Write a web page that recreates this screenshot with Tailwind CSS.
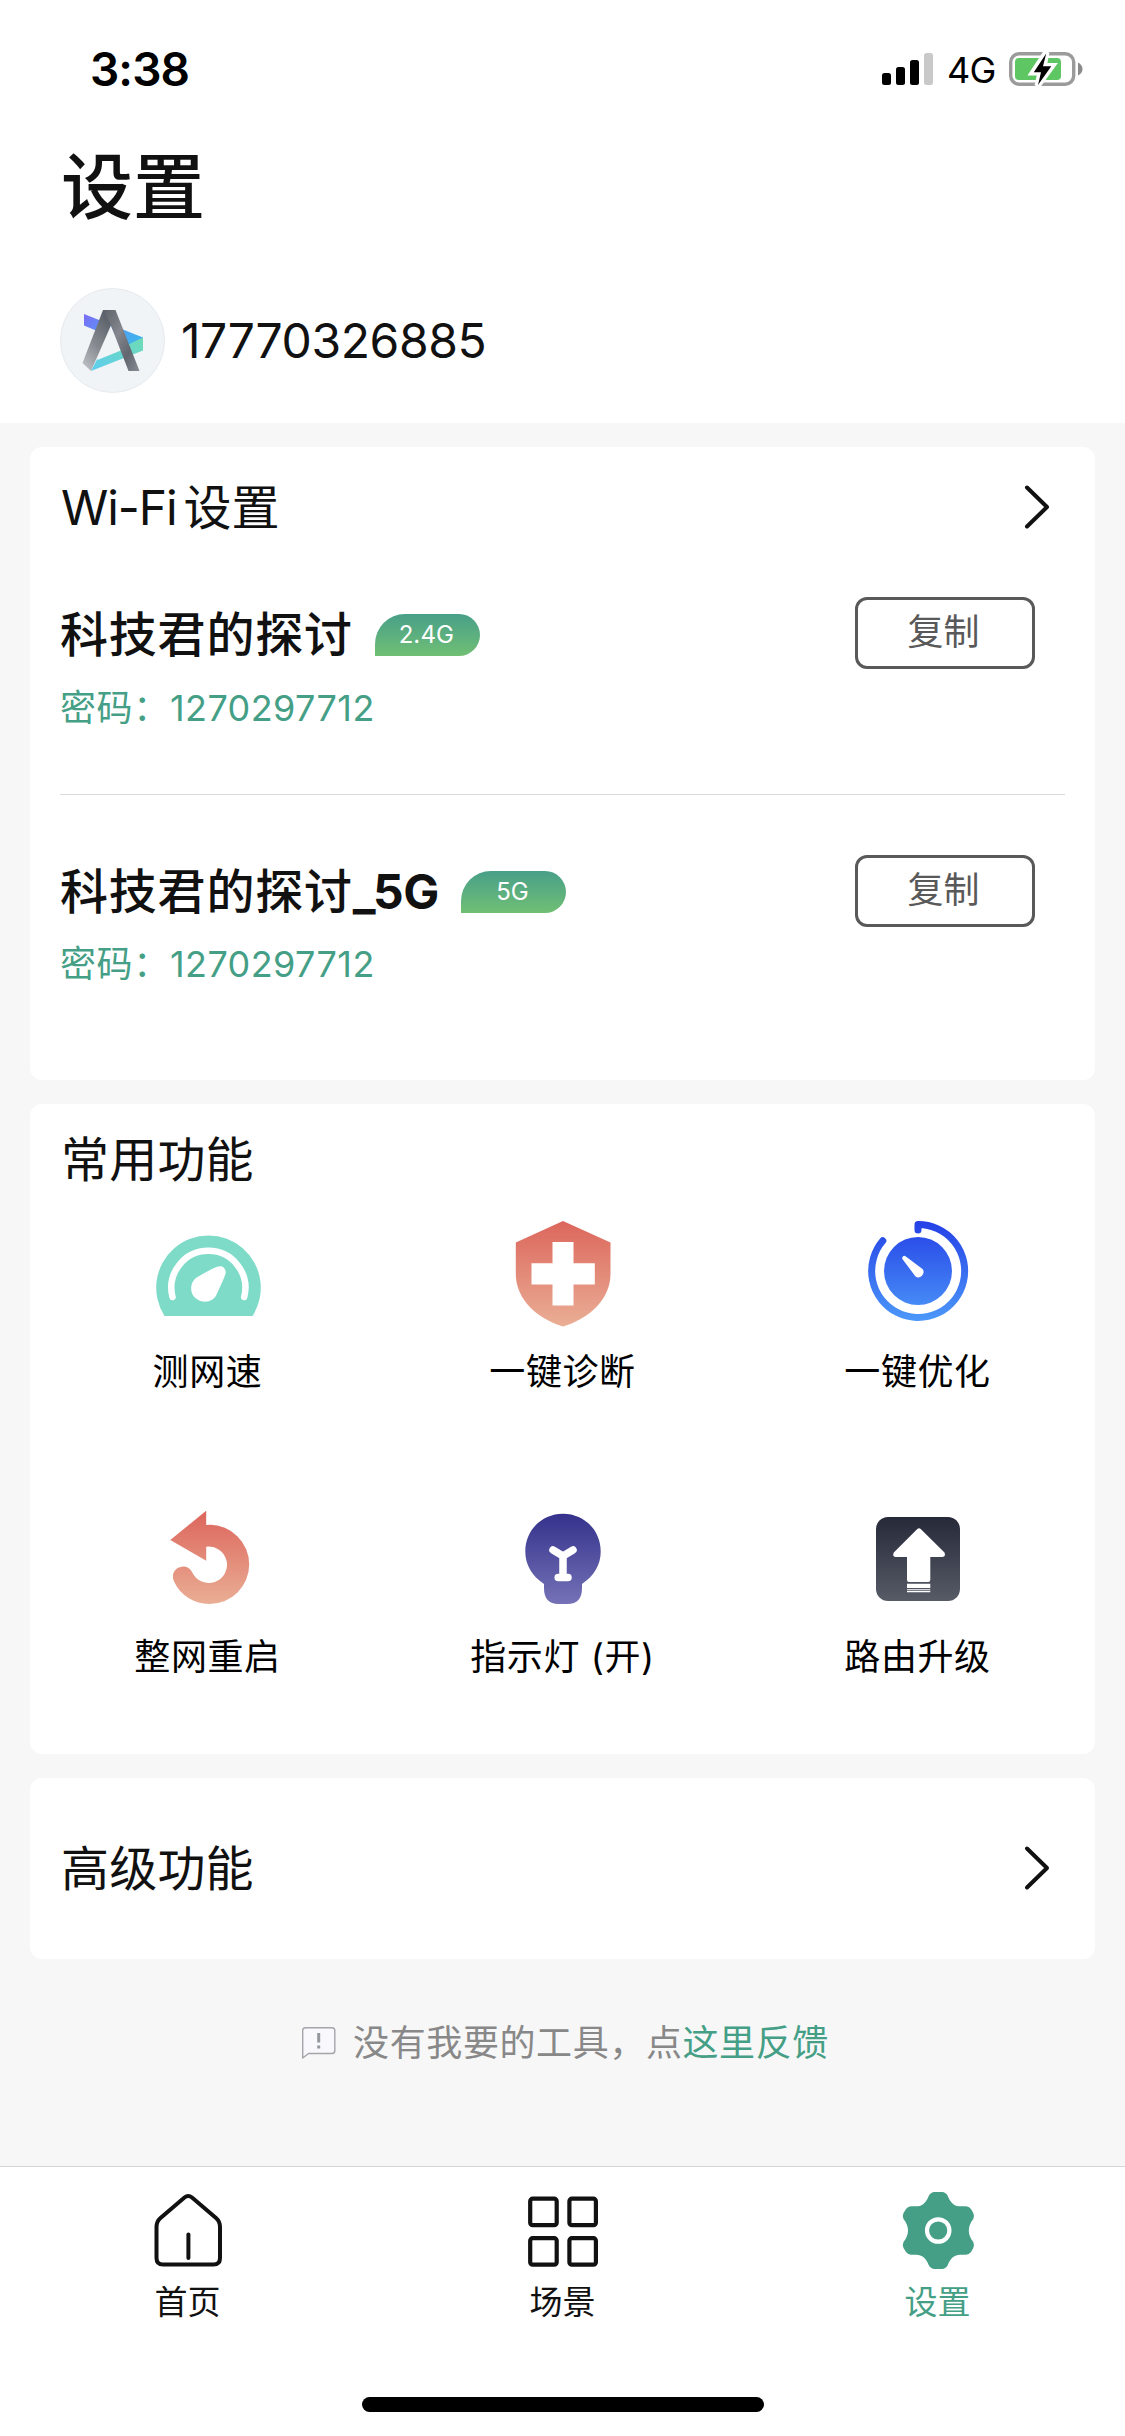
<!DOCTYPE html>
<html lang="zh-CN">
<head>
<meta charset="utf-8">
<title>设置</title>
<script src="https://cdn.jsdelivr.net/npm/@tailwindcss/browser@4"></script>
</head>
<body class="bg-white">
<div class="flex h-[2436px] w-[1125px] flex-col overflow-hidden bg-white font-['Inter','Noto_Sans_CJK_SC',sans-serif] text-[#111111]">

  <header class="h-[423px] shrink-0">
    <div class="flex h-[138px] items-center justify-between pl-[90px] pr-[42px] text-black">
      <span class="text-[46px] leading-[60px] font-semibold tracking-[-.9px]">3:38</span>
      <div class="flex items-center">
        <svg class="h-[34px] w-[52px]" viewBox="882 52 52 34">
          <rect x="882" y="73" width="9" height="12" rx="2.5"/>
          <rect x="896" y="67" width="9" height="18" rx="2.5"/>
          <rect x="910" y="60" width="9" height="25" rx="2.5"/>
          <rect x="924" y="53" width="9" height="32" rx="2.5" fill="#c9c9c9"/>
        </svg>
        <span class="ml-[13px] w-[62px] pt-[2px] text-[36px] leading-[48px] tracking-[-.8px]">4G</span>
        <svg class="h-[36px] w-[74px]" viewBox="1009 51 74 36">
          <rect x="1010.7" y="53.7" width="63" height="30.6" rx="8.5" fill="#fff" stroke="#9b9b9b" stroke-width="3.4"/>
          <rect x="1015" y="58" width="46" height="22" rx="4" fill="#5ec662"/>
          <path d="M1078 62.5q4.500 2.500 4.500 6.500t-4.500 6.500z" fill="#8a8a8a"/>
          <path d="M1046.500 52 1033 72.500H1040.500L1037.500 86 1052 66H1043.800z" stroke="#fff" stroke-width="6" fill="#fff"/>
          <path d="M1046.200 53.500 1033.800 72.300H1041L1038 85 1051.300 66.300H1043z" fill="#000"/>
        </svg>
      </div>
    </div>
    <h1 class="h-[98px] pl-[61px] text-[72px] leading-[98px] font-medium">设置</h1>
    <div class="flex items-center pt-[52px] pl-[60px]">
      <svg class="h-[105px] w-[105px]" viewBox="60 288 105 105">
        <defs>
          <linearGradient id="lg1" x1="0" y1="0" x2="1" y2=".5"><stop offset="0" stop-color="#7c6cf4"/><stop offset=".45" stop-color="#5c92fb"/><stop offset="1" stop-color="#43b0ee"/></linearGradient>
          <linearGradient id="lg2" x1="1" y1="0" x2="0" y2="1"><stop offset="0" stop-color="#6fdcb4"/><stop offset="1" stop-color="#5dcdf0"/></linearGradient>
          <linearGradient id="lg3" x1=".6" y1="0" x2="0" y2="1"><stop offset="0" stop-color="#5a6069"/><stop offset=".5" stop-color="#85898f"/><stop offset="1" stop-color="#c5c8cc"/></linearGradient>
          <linearGradient id="lg4" x1="0" y1="0" x2="1" y2="1"><stop offset="0" stop-color="#5c6068"/><stop offset=".4" stop-color="#84878d"/><stop offset=".7" stop-color="#62666f"/><stop offset="1" stop-color="#888c93"/></linearGradient>
        </defs>
        <circle cx="112.500" cy="340.500" r="52" fill="#f0f4f7" stroke="#e6eaee"/>
        <path d="M84 314 143 337.500V344L132 345.500 84 325.500z" fill="url(#lg1)"/>
        <path d="M143 337.500V350.500L91 371 97 359.500z" fill="url(#lg2)"/>
        <path d="M110 324 122 350 97.500 360z" fill="#f0f4f7"/>
        <path d="M103 310H115L112 323 91 371 82.500 363z" fill="url(#lg3)"/>
        <path d="M103 310H115.500L139.500 371H128.500L110 323z" fill="url(#lg4)"/>
      </svg>
      <span class="ml-[16px] text-[48px] leading-[60px] tracking-[-.4px]">17770326885</span>
    </div>
  </header>

  <main class="flex flex-1 flex-col bg-[#f7f7f7] px-[30px] pt-[24px]">
    <section class="h-[633px] rounded-[12px] bg-white px-[30px]">
      <div class="flex h-[120px] items-center justify-between pr-[14px] pl-[1px]">
        <h2 class="flex pt-[1px] text-[48px] leading-[60px]"><span class="tracking-[-1.100px]">Wi-Fi</span><span class="ml-[7px]">设置</span></h2>
        <svg class="h-[48px] w-[28px]" viewBox="0 0 28 48" fill="none" stroke="#111" stroke-width="4" stroke-linecap="round" stroke-linejoin="round"><path d="M4 4.500 24 24 4 43.500"/></svg>
      </div>
      <div class="flex h-[228px] justify-between border-b border-[#d9d9d9] pr-[30px]">
        <div class="pt-[38px]">
          <div class="flex h-[60px] items-center">
            <span class="text-[48px] leading-[60px] font-medium tracking-[.8px]">科技君的探讨</span>
            <span class="ml-[22px] flex h-[42px] w-[105px] items-center justify-center rounded-[21px] rounded-tl-[30px] rounded-bl-none bg-linear-to-b from-[#489f88] to-[#70bf73] pr-[2px] text-[24px] leading-none tracking-[.1px] text-white">2.4G</span>
          </div>
          <div class="mt-[16px] flex h-[54px] items-center text-[36px] text-[#459f86]"><span class="w-[110px] tracking-[.6px]">密码：</span><span class="tracking-[.4px]">1270297712</span></div>
        </div>
        <button class="mt-[30px] h-[72px] w-[180px] rounded-[12px] border-[3px] border-[#595959] pr-[3px] pb-[2px] text-[36px] leading-[60px] text-[#595959]">复制</button>
      </div>
      <div class="flex justify-between pr-[30px]">
        <div class="pt-[67px]">
          <div class="flex h-[60px] items-center">
            <span class="text-[48px] leading-[60px] font-medium tracking-[.8px]">科技君的探讨<span class="font-bold tracking-[-.4px]">_5G</span></span>
            <span class="ml-[22px] flex h-[42px] w-[105px] items-center justify-center rounded-[21px] rounded-tl-[30px] rounded-bl-none bg-linear-to-b from-[#489f88] to-[#70bf73] pr-[2px] text-[24px] leading-none tracking-[.1px] text-white">5G</span>
          </div>
          <div class="mt-[15px] flex h-[54px] items-center text-[36px] text-[#459f86]"><span class="w-[110px] tracking-[.6px]">密码：</span><span class="tracking-[.4px]">1270297712</span></div>
        </div>
        <button class="mt-[60px] h-[72px] w-[180px] rounded-[12px] border-[3px] border-[#595959] pr-[3px] pb-[2px] text-[36px] leading-[60px] text-[#595959]">复制</button>
      </div>
    </section>

    <section class="mt-[24px] h-[650px] rounded-[12px] bg-white">
      <h2 class="h-[110px] pl-[31px] text-[48px] leading-[112px] tracking-[.2px]">常用功能</h2>
      <div class="grid grid-cols-3 text-[36px] leading-[54px] tracking-[.6px] text-black">
        <div class="flex h-[285px] flex-col items-center">
          <svg class="h-[120px] w-[120px]" viewBox="148 1214 120 120">
            <path d="M164.500 1316A52.300 52.300 0 1 1 252.500 1316z" fill="#7ddbc8"/>
            <path d="M172.500 1297A37 37 0 1 1 244.200 1297" fill="none" stroke="#fff" stroke-width="6.500" stroke-linecap="round"/>
            <path d="M217 1266.800Q224.500 1264.500 225.800 1272Q225.800 1275 217 1293.500C213 1304.500 198 1304 192.500 1294.500C189 1286 193 1279.500 197.500 1277Q209 1270 217 1266.800z" fill="#fff"/>
          </svg>
          <span class="mt-[11px]">测网速</span>
        </div>
        <div class="flex h-[285px] flex-col items-center">
          <svg class="h-[120px] w-[120px]" viewBox="503 1214 120 120">
            <defs><linearGradient id="red" x1="0" y1="0" x2="0" y2="1"><stop offset="0" stop-color="#dc665c"/><stop offset="1" stop-color="#eaae95"/></linearGradient></defs>
            <path d="M563 1221 610.500 1242.500V1274C610.500 1300 588 1319 563 1326.500C538 1319 515.800 1300 515.800 1274V1242.500z" fill="url(#red)"/>
            <path d="M552.500 1242H573.500V1263.300H594.800V1284.500H573.500V1305.500H552.500V1284.500H531.500V1263.300H552.500z" fill="#fff"/>
          </svg>
          <span class="mt-[11px]">一键诊断</span>
        </div>
        <div class="flex h-[285px] flex-col items-center">
          <svg class="h-[120px] w-[120px]" viewBox="858 1214 120 120">
            <defs><linearGradient id="blue" gradientUnits="userSpaceOnUse" x1="0" y1="1221" x2="0" y2="1321"><stop offset="0" stop-color="#2440e6"/><stop offset="1" stop-color="#4c98f9"/></linearGradient></defs>
            <path d="M918 1230V1224.500A46.500 46.500 0 1 1 882.800 1240.800" fill="none" stroke="url(#blue)" stroke-width="7" stroke-linecap="round" stroke-linejoin="round"/>
            <circle cx="918" cy="1271" r="34" fill="url(#blue)"/>
            <path d="M905.500 1256.200 922.800 1269.300A5.300 5.300 0 0 1 915.500 1276.500L902.400 1259A2.200 2.200 0 0 1 905.500 1256.200z" fill="#fff"/>
          </svg>
          <span class="mt-[11px]">一键优化</span>
        </div>
        <div class="flex flex-col items-center">
          <svg class="h-[120px] w-[120px]" viewBox="148 1499 120 120">
            <defs><linearGradient id="red2" gradientUnits="userSpaceOnUse" x1="0" y1="1511" x2="0" y2="1604"><stop offset="0" stop-color="#dc655c"/><stop offset="1" stop-color="#eaae95"/></linearGradient></defs>
            <path d="M170.300 1540 206.200 1510.700V1525Q208 1524.800 209.600 1524.800A39.600 39.600 0 0 1 209.600 1604C194 1604 180.500 1595.500 174 1581.500C170.500 1573 176 1566.500 184 1566.500Q189.500 1567 192.300 1572.500A18.200 18.200 0 1 0 206.200 1546.800V1560.700z" fill="url(#red2)"/>
          </svg>
          <span class="mt-[11px]">整网重启</span>
        </div>
        <div class="flex flex-col items-center">
          <svg class="h-[120px] w-[120px]" viewBox="503 1499 120 120">
            <defs><linearGradient id="vio" x1="0" y1="0" x2="0" y2="1"><stop offset="0" stop-color="#34328b"/><stop offset="1" stop-color="#7572b7"/></linearGradient></defs>
            <path d="M563 1513.700C584 1513.700 600.700 1530 600.700 1551.500C600.700 1565 594 1576 582 1584V1588Q582 1604 567.500 1604H558.500Q544 1604 544 1588V1584C532 1576 525.300 1565 525.300 1551.500C525.300 1530 542 1513.700 563 1513.700z" fill="url(#vio)"/>
            <path d="M553 1550 563 1556 573 1550M563 1556V1577M558.200 1577.500H568" fill="none" stroke="#fff" stroke-width="7.500" stroke-linecap="round" stroke-linejoin="round"/>
          </svg>
          <span class="mt-[11px]">指示灯 (开)</span>
        </div>
        <div class="flex flex-col items-center">
          <svg class="h-[120px] w-[120px]" viewBox="858 1499 120 120">
            <defs><linearGradient id="ink" x1="0" y1="0" x2="0" y2="1"><stop offset="0" stop-color="#262939"/><stop offset="1" stop-color="#575b66"/></linearGradient></defs>
            <rect x="876" y="1517" width="84" height="84" rx="12" fill="url(#ink)"/>
            <path d="M917.300 1529Q919 1527.300 920.700 1529L944.500 1552.500Q946 1556.500 942.500 1557H930.300V1580Q930.300 1582 928.300 1582H909Q907 1582 907 1580V1557H895.500Q892 1556.500 893.800 1552.500z" fill="#fff"/>
            <path d="M907 1583.700H930.300V1588H907zM907 1589.200H930.300V1590.300H907zM907 1591H930.300V1592.200H907z" fill="#fff"/>
          </svg>
          <span class="mt-[11px]">路由升级</span>
        </div>
      </div>
    </section>

    <section class="mt-[24px] flex h-[181px] items-center justify-between rounded-[12px] bg-white pr-[44px] pb-px pl-[31px]">
      <h2 class="pt-[1px] text-[48px] leading-[60px] tracking-[.2px]">高级功能</h2>
      <svg class="h-[48px] w-[28px]" viewBox="0 0 28 48" fill="none" stroke="#111" stroke-width="4" stroke-linecap="round" stroke-linejoin="round"><path d="M4 4.500 24 24 4 43.500"/></svg>
    </section>

    <p class="mt-[57px] flex h-[54px] items-center justify-center pl-[5px] text-[36px] tracking-[.6px] text-[#888888]">
      <svg class="mr-[16px] h-[34px] w-[36px]" viewBox="300.500 2025 36 34">
        <path d="M302.200 2057V2029.500Q302.200 2026.700 305 2026.700H331.500Q334.300 2026.700 334.300 2029.500V2049.700Q334.300 2052.500 331.500 2052.500H308z" fill="#f9f9fd" stroke="#a3a5aa" stroke-width="1.400" stroke-linejoin="round"/>
        <path d="M318.200 2032V2041.500M318.200 2044.500V2047.500" stroke="#96989f" stroke-width="3"/>
      </svg>
      <span>没有我要的工具，点<a class="text-[#459f86]">这里反馈</a></span>
    </p>
  </main>

  <nav class="h-[270px] shrink-0 border-t border-[#d6d6d6] bg-white">
    <div class="grid grid-cols-3 pt-[23px] text-[33px] leading-[44px]">
      <div class="flex flex-col items-center">
        <svg class="h-[80px] w-[80px]" viewBox="148 2190 80 80" fill="none" stroke="#111" stroke-width="4" stroke-linecap="round" stroke-linejoin="round">
          <path d="M184.500 2197.500Q188.200 2194.500 192 2197.500L216 2218Q220 2221.500 220 2227V2258Q220 2264.500 213.500 2264.500H163Q156.500 2264.500 156.500 2258V2227Q156.500 2221.500 160.500 2218z"/>
          <path d="M188.400 2234.500V2258"/>
        </svg>
        <span class="mt-[10px] h-[43px]">首页</span>
      </div>
      <div class="flex flex-col items-center">
        <svg class="h-[80px] w-[80px]" viewBox="523 2190 80 80" fill="none" stroke="#111" stroke-width="4.200">
          <rect x="530.200" y="2198.700" width="26.500" height="26.500" rx="2.500"/>
          <rect x="569.400" y="2198.700" width="26.500" height="26.500" rx="2.500"/>
          <rect x="530.200" y="2238.200" width="26.500" height="26.500" rx="2.500"/>
          <rect x="569.400" y="2238.200" width="26.500" height="26.500" rx="2.500"/>
        </svg>
        <span class="mt-[10px] h-[43px]">场景</span>
      </div>
      <div class="flex flex-col items-center text-[#459f86]">
        <svg class="h-[80px] w-[80px]" viewBox="898 2190 80 80">
          <path d="M934.500 2192H942Q946 2192.300 947.800 2196C950.500 2203 954.500 2206.300 960 2206.300H966Q969 2206.300 971 2209L973.300 2213Q974.700 2216 973.300 2219C967.300 2226.500 967.300 2234.500 973.300 2242Q974.700 2245 973.300 2248L971 2252Q969 2254.700 966 2254.700H960C954.500 2254.700 950.500 2258 947.800 2265Q946 2268.700 942 2269H934.500Q930.500 2268.700 928.700 2265C926 2258 922 2254.700 916.500 2254.700H911Q908 2254.700 906 2252L903.500 2248Q902 2245 903.500 2242C909.500 2234.500 909.500 2226.500 903.500 2219Q902 2216 903.500 2213L906 2209Q908 2206.300 911 2206.300H916.500C922 2206.300 926 2203 928.700 2196Q930.500 2192.300 934.500 2192z" fill="#459f86"/>
          <circle cx="938.200" cy="2230.500" r="11.200" fill="none" stroke="#fff" stroke-width="4.200"/>
        </svg>
        <span class="mt-[10px] h-[43px]">设置</span>
      </div>
    </div>
    <div class="mx-auto mt-[74px] h-[15px] w-[402px] rounded-full bg-black"></div>
  </nav>
</div>
</body>
</html>
